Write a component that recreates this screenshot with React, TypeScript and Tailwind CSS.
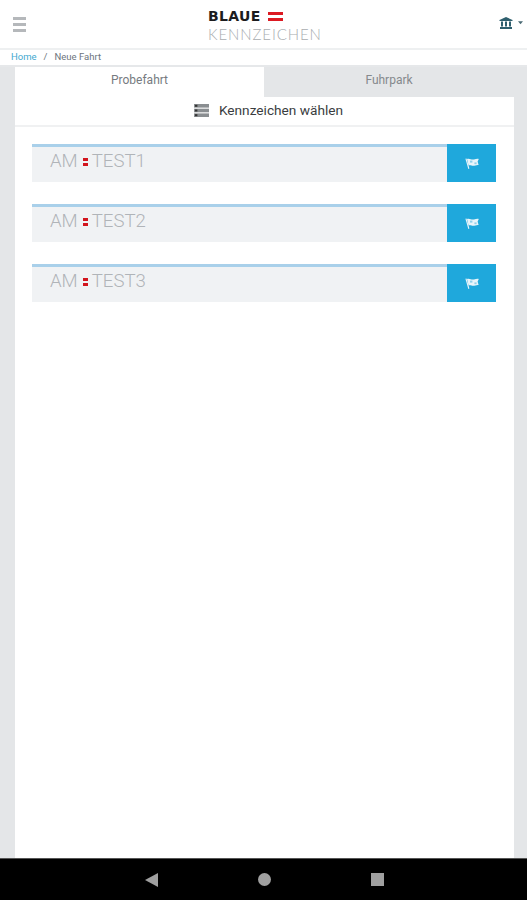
import React from "react";

function Flag() {
  return (
    <svg width="14" height="11" viewBox="0 0 14 11" fill="#e8f4fa">
      <path d="M0.4 0.8 L1.5 0.4 L4.4 10.6 L3.3 11 Z" />
      <path d="M2 1 C4.5 -0.2 6.4 2.2 9 1.4 C10.8 0.9 12.4 0.6 13.8 0.9 L12.6 3.6 L13.6 7 C11 6.6 9.2 8.4 6.6 7.6 C5.4 7.2 4.4 7 3.6 7.4 Z" />
      <rect x="5" y="2.6" width="2.4" height="2" fill="#8fd0ea" />
      <rect x="9.4" y="4.4" width="2.2" height="1.8" fill="#8fd0ea" />
    </svg>
  );
}

function Plate({ text }: { text: string }) {
  return (
    <div className="flex h-[38px] items-stretch">
      <div className="flex flex-1 items-start border-t-[3px] border-[#a9d0ea] bg-[#f0f2f4] pl-[18px]">
        <div className="flex h-[28px] items-center text-[18.6px] font-light leading-none text-[#b0b4b8]">
          <span>AM</span>
          <span className="ml-[5px] mr-[4px] mt-[2px] flex flex-col gap-[2px]">
            <span className="block h-[3px] w-[5px] bg-[#d2161e]" />
            <span className="block h-[3px] w-[5px] bg-[#d2161e]" />
          </span>
          <span>{text}</span>
        </div>
      </div>
      <div className="flex w-[49px] items-center justify-center bg-[#1fa8dc]">
        <Flag />
      </div>
    </div>
  );
}

export default function App() {
  return (
    <div
      className="flex h-[900px] w-[527px] flex-col overflow-hidden bg-[#e4e6e8]"
      style={{ fontFamily: "Roboto, 'Liberation Sans', sans-serif" }}
    >
      <header className="relative flex h-[50px] shrink-0 items-center justify-between border-b-2 border-[#eef0f1] bg-white pl-[13px] pr-[4px]">
        <div className="flex w-[13px] flex-col gap-[3px]">
          <span className="block h-[3px] bg-[#b5b8bb]" />
          <span className="block h-[3px] bg-[#b5b8bb]" />
          <span className="block h-[3px] bg-[#b5b8bb]" />
        </div>
        <div className="absolute left-[208px] top-[9px] flex flex-col">
          <div className="flex items-center gap-[7px]">
            <span className="text-[14px] font-bold leading-[14px] tracking-[0.35px] text-[#1c1c1e]" style={{ fontFamily: "'DejaVu Sans', sans-serif" }}>
              BLAUE
            </span>
            <span className="mt-[1px] flex flex-col gap-[3px]">
              <span className="block h-[3px] w-[15px] bg-[#dc1a22]" />
              <span className="block h-[3px] w-[15px] bg-[#dc1a22]" />
            </span>
          </div>
          <span className="mt-[4px] text-[15px] font-light leading-[15px] tracking-[0.9px] text-[#a9adb0]" style={{ fontFamily: "Lato, sans-serif" }}>
            KENNZEICHEN
          </span>
        </div>
        <div className="mt-[-3px] flex items-center gap-[5px]">
          <svg width="14" height="14" viewBox="0 0 14 14" fill="#2f5f6e">
            <path d="M7 1 L13.5 4 V5 H0.5 V4 Z" />
            <rect x="2" y="5.5" width="2" height="5" />
            <rect x="6" y="5.5" width="2" height="5" />
            <rect x="10" y="5.5" width="2" height="5" />
            <rect x="1" y="11" width="12" height="2" />
          </svg>
          <svg width="5" height="4" viewBox="0 0 6 4" fill="#4a6a74">
            <path d="M0 0 H6 L3 3.5 Z" />
          </svg>
        </div>
      </header>

      <nav className="flex h-[17px] shrink-0 items-center border-b-2 border-[#e6e8ea] bg-white pb-[1px] pl-[11px] text-[9.5px] leading-none text-[#6c757d]">
        <span className="text-[#3fa9d0]">Home</span>
        <span className="mx-[7px]">/</span>
        <span>Neue Fahrt</span>
      </nav>

      <div className="mr-[13px] flex h-[30px] shrink-0">
        <div className="ml-[15px] flex w-[249px] items-center justify-center bg-white pb-[5px] text-[12px] text-[#777b7f]">
          Probefahrt
        </div>
        <div className="flex flex-1 items-center justify-center pb-[5px] text-[12px] text-[#85898d]">Fuhrpark</div>
      </div>

      <main className="ml-[15px] mr-[13px] flex flex-1 flex-col bg-white">
        <div className="flex h-[30px] shrink-0 items-center justify-center gap-[10px] border-b-2 border-[#f0f1f2] pb-[2px] pl-[8px] text-[13.66px] text-[#3a3d40]">
          <svg width="15" height="13" viewBox="0 0 15 13" fill="#8a8e91">
            <rect x="0" y="0" width="15" height="3.6" />
            <rect x="0" y="4.7" width="15" height="3.6" />
            <rect x="0" y="9.4" width="15" height="3.6" />
            <rect x="1" y="0.8" width="2.4" height="2" fill="#333" />
            <rect x="1" y="5.5" width="2.4" height="2" fill="#333" />
            <rect x="1" y="10.2" width="2.4" height="2" fill="#333" />
          </svg>
          <span>Kennzeichen wählen</span>
        </div>
        <div className="flex flex-col gap-[22px] pl-[17px] pr-[18px] pt-[17px]">
          <Plate text="TEST1" />
          <Plate text="TEST2" />
          <Plate text="TEST3" />
        </div>
      </main>

      <footer className="flex h-[42px] shrink-0 items-center border-t border-[#555] bg-black">
        <div className="flex w-full items-center justify-center gap-[100px] pl-[1px]">
          <svg width="13" height="14" viewBox="0 0 13 14" fill="#a0a0a0">
            <path d="M13 0 V14 L0 7 Z" />
          </svg>
          <span className="block h-[13px] w-[13px] rounded-full bg-[#a0a0a0]" />
          <span className="block h-[13px] w-[13px] bg-[#a0a0a0]" />
        </div>
      </footer>
    </div>
  );
}
